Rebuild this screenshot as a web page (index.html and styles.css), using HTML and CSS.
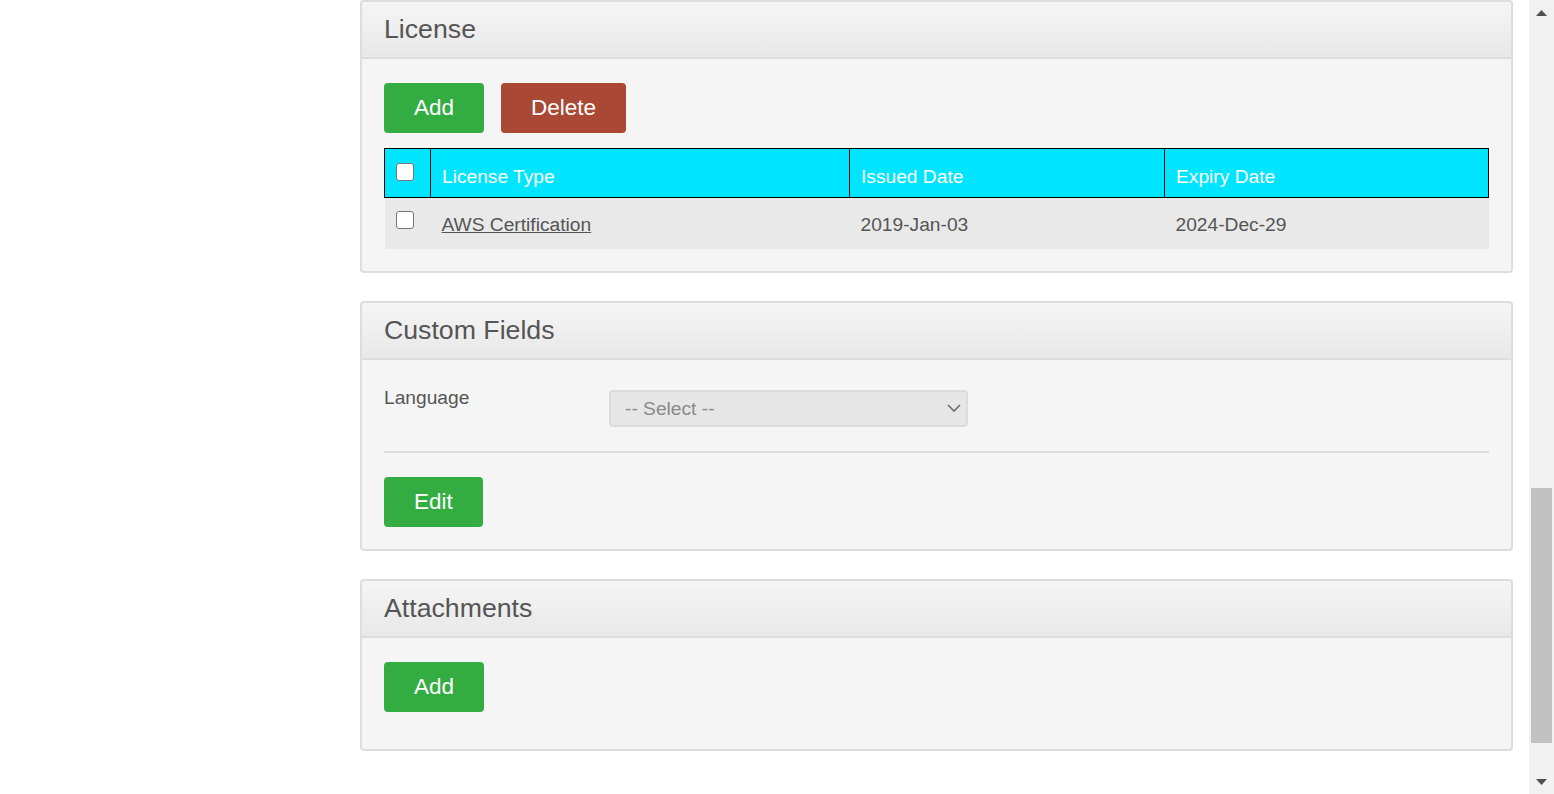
FILE: index.html
```html
<!DOCTYPE html>
<html lang="en">
<head>
<meta charset="utf-8">
<title>Employee Profile</title>
<link rel="stylesheet" href="styles.css">
</head>
<body>
<div class="page">
  <main class="content">
    <section class="panel panel-first">
      <header class="panel-heading"><h3 class="panel-title">License</h3></header>
      <div class="panel-body">
        <div class="btn-row">
          <button type="button" class="btn btn-success">Add</button>
          <button type="button" class="btn btn-danger">Delete</button>
        </div>
        <table class="grid">
          <thead>
            <tr>
              <th class="col-check"><input type="checkbox" class="check" aria-label="Select all"></th>
              <th class="col-type">License Type</th>
              <th class="col-issued">Issued Date</th>
              <th class="col-expiry">Expiry Date</th>
            </tr>
          </thead>
          <tbody>
            <tr>
              <td class="col-check"><input type="checkbox" class="check" aria-label="Select row"></td>
              <td><a href="#" class="link">AWS Certification</a></td>
              <td>2019-Jan-03</td>
              <td>2024-Dec-29</td>
            </tr>
          </tbody>
        </table>
      </div>
    </section>

    <section class="panel">
      <header class="panel-heading"><h3 class="panel-title">Custom Fields</h3></header>
      <div class="panel-body">
        <div class="form-row">
          <label class="form-label" for="lang">Language</label>
          <div class="select-wrap">
            <select id="lang" class="select" disabled>
              <option>-- Select --</option>
            </select>
            <svg class="select-chevron" width="14" height="8" viewBox="0 0 14 8" aria-hidden="true">
              <polyline points="1,1 7,7 13,1" fill="none" stroke="#6d6d6d" stroke-width="1.6"/>
            </svg>
          </div>
        </div>
        <hr class="divider">
        <button type="button" class="btn btn-success">Edit</button>
      </div>
    </section>

    <section class="panel">
      <header class="panel-heading"><h3 class="panel-title">Attachments</h3></header>
      <div class="panel-body panel-body-tall">
        <button type="button" class="btn btn-success">Add</button>
      </div>
    </section>
  </main>

  <div class="scrollbar" aria-hidden="true">
    <div class="sb-arrow">
      <svg width="11" height="6" viewBox="0 0 11 6"><polygon points="0,6 11,6 5.5,0" fill="#505050"/></svg>
    </div>
    <div class="sb-track"><div class="sb-thumb"></div></div>
    <div class="sb-arrow">
      <svg width="11" height="6" viewBox="0 0 11 6"><polygon points="0,0 11,0 5.5,6" fill="#505050"/></svg>
    </div>
  </div>
</div>
</body>
</html>
```

FILE: styles.css
```css
html, body {
  margin: 0;
  height: 100%;
  overflow: hidden;
  background: #fff;
}

body {
  font-family: "Liberation Sans", Arial, sans-serif;
  font-size: 19.2px;
  color: #555;
}

.page {
  display: flex;
  height: 794px;
}

.content {
  flex: 1;
  padding: 0 16px 0 360px;
  display: flex;
  flex-direction: column;
  gap: 28px;
}

.panel {
  border: 2px solid #ddd;
  border-radius: 4px;
  background: #f5f5f5;
}

.panel-heading {
  height: 55px;
  border-bottom: 2px solid #ddd;
  background: linear-gradient(#f5f5f5, #e8e8e8);
  border-radius: 3px 3px 0 0;
  display: flex;
  align-items: center;
  padding: 0 22px;
}

.panel-title {
  margin: 0;
  font-size: 26.7px;
  font-weight: normal;
  color: #555;
}

.panel-body {
  padding: 24px 22px 22px;
}

.panel-body-tall {
  padding-bottom: 37px;
}

.btn-row {
  display: flex;
  gap: 17px;
}

.btn {
  display: block;
  height: 50px;
  padding: 0 30px;
  border: 0;
  border-radius: 4px;
  color: #fff;
  font-family: inherit;
  font-size: 22.5px;
  cursor: pointer;
}

.btn-success {
  background: #33ad42;
}

.btn-danger {
  background: #aa4836;
}

.grid {
  width: 100%;
  border-collapse: collapse;
  margin-top: 15px;
}

.grid th {
  background: #00e5ff;
  color: #fff;
  border: 1px solid #000;
  font-weight: normal;
  text-align: left;
  vertical-align: top;
  height: 49px;
  box-sizing: border-box;
  padding: 14px 11px 0;
  line-height: 27px;
}

.grid td {
  background: #e9e9e9;
  vertical-align: top;
  height: 51px;
  box-sizing: border-box;
  padding: 13px 11px 0;
  line-height: 27px;
}

.grid .col-check {
  width: 46px;
  padding-top: 14px;
}

.grid td.col-check {
  padding-top: 13px;
}

.grid .col-type {
  width: 419px;
}

.grid .col-issued {
  width: 315px;
}

.check {
  -webkit-appearance: none;
  appearance: none;
  display: block;
  width: 18px;
  height: 18px;
  margin: 0;
  border: 1px solid #767676;
  border-radius: 3px;
  background: #fff;
}

.link {
  color: #555;
  text-decoration: underline;
}

.form-row {
  display: flex;
  align-items: flex-start;
}

.form-label {
  width: 225px;
  flex: none;
  line-height: 27px;
}

.select-wrap {
  position: relative;
  width: 359px;
  margin-top: 6px;
}

.select {
  -webkit-appearance: none;
  appearance: none;
  display: block;
  width: 100%;
  height: 37px;
  box-sizing: border-box;
  border: 2px solid #dcdcdc;
  border-radius: 4px;
  background: #e6e6e6;
  color: #8a8a8a;
  font-family: inherit;
  font-size: 19.2px;
  padding: 0 14px;
  opacity: 1;
}

.select-chevron {
  position: absolute;
  right: 7px;
  top: 14px;
  pointer-events: none;
}

.divider {
  border: 0;
  border-top: 2px solid #ddd;
  margin: 24px 0;
}

.scrollbar {
  width: 25px;
  flex: none;
  background: #f1f1f1;
  display: flex;
  flex-direction: column;
}

.sb-arrow {
  height: 25px;
  display: flex;
  align-items: center;
  justify-content: center;
}

.sb-track {
  flex: 1;
  padding: 463px 2px 0;
}

.sb-thumb {
  height: 255px;
  background: #c1c1c1;
}
```
